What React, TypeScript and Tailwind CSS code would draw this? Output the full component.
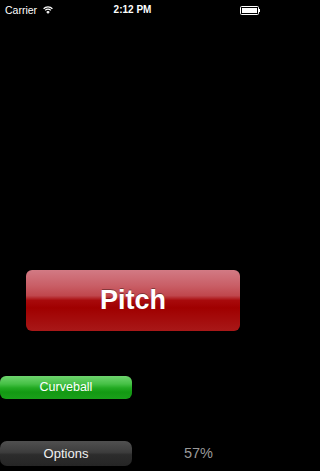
import React from 'react';

const font = { fontFamily: '"Liberation Sans", Arial, sans-serif' };

const StatusBar: React.FC = () => (
  <div className="relative flex h-5 items-center px-[5px] text-white" style={font}>
    <div className="flex items-center gap-[6px]">
      <span className="text-[10.5px] leading-none">Carrier</span>
      <svg width="10" height="8" viewBox="0 0 10 8" className="mb-[1px]">
        <path d="M0.6 2.8 A6.2 6.2 0 0 1 9.4 2.8" fill="none" stroke="white" strokeWidth="1.3" />
        <path d="M2.2 4.4 A3.9 3.9 0 0 1 7.8 4.4" fill="none" stroke="white" strokeWidth="1.3" />
        <path d="M3.7 5.9 A1.8 1.8 0 0 1 6.3 5.9 L5 7.4 Z" fill="white" stroke="white" strokeWidth="0.8" />
      </svg>
    </div>
    <span className="absolute left-0 right-0 text-center text-[10px] font-semibold leading-none">2:12 PM</span>
    <div className="ml-auto flex items-center">
      <div className="h-[9px] w-[19px] rounded-[1.5px] border border-white p-[1px]">
        <div className="h-full w-full bg-white" />
      </div>
      <div className="h-[3px] w-[1.5px] bg-white" />
    </div>
  </div>
);

const App: React.FC = () => {
  return (
    <div className="min-h-screen w-full bg-black">
      <div className="flex h-[471px] w-[265px] flex-col overflow-hidden bg-black" style={font}>
        <StatusBar />
        <button
          type="button"
          className="mx-[26px] mt-[250px] flex h-[61px] w-[214px] items-center justify-center rounded-[6px] bg-[linear-gradient(to_bottom,#d27a84_0%,#c95f67_25%,#c0474d_42%,#a80a0c_50%,#a00000_62%,#a81818_100%)] text-[27px] font-bold text-white [text-shadow:0_-1px_0_rgba(0,0,0,0.35)]"
        >
          Pitch
        </button>
        <button
          type="button"
          className="mt-[45px] flex h-[23px] w-[132px] items-center justify-center rounded-[6px] bg-[linear-gradient(to_bottom,#6fd56f_0%,#45c045_35%,#22aa22_52%,#139913_70%,#1a9f1a_100%)] text-[12.5px] text-white"
        >
          Curveball
        </button>
        <div className="mt-[42px] flex items-center">
          <button
            type="button"
            className="flex h-[25px] w-[132px] items-center justify-center rounded-[7px] bg-[linear-gradient(to_bottom,#505050_0%,#3d3d3d_45%,#2c2c2c_55%,#252525_100%)] text-[13px] text-[#f0f0f0]"
          >
            Options
          </button>
          <span className="flex-1 text-center text-[14.5px] text-[#9a9a9a]">57%</span>
        </div>
      </div>
    </div>
  );
};

export default App;
